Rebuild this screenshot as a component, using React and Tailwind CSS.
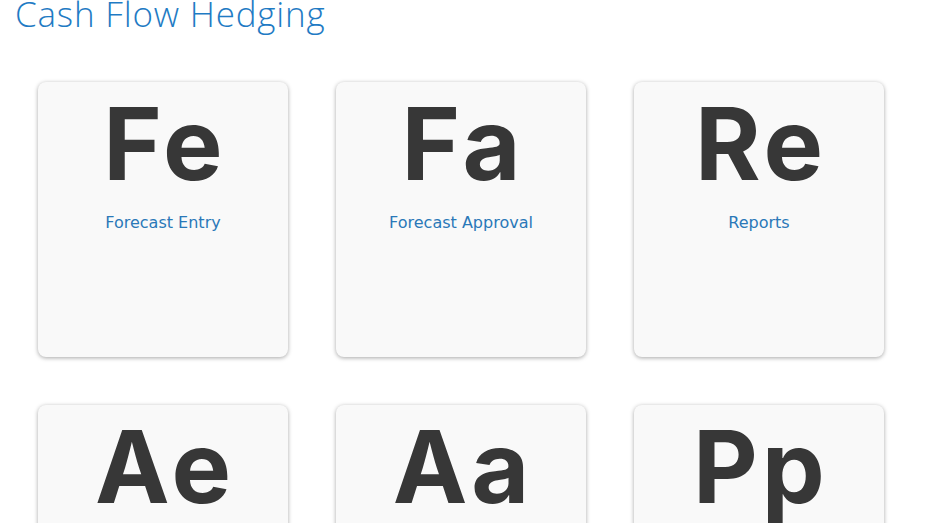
const tiles = [
  { abbr: "Fe", label: "Forecast Entry" },
  { abbr: "Fa", label: "Forecast Approval" },
  { abbr: "Re", label: "Reports" },
  { abbr: "Ae", label: "Approval Entry" },
  { abbr: "Aa", label: "Approval Archive" },
  { abbr: "Pp", label: "Policy Parameters" },
];

const Tile = ({ abbr, label }) => (
  <div className="w-[250px] h-[275px] bg-[#f9f9f9] rounded-[8px] shadow-[0_1px_4px_rgba(0,0,0,0.35)] flex flex-col items-center cursor-pointer">
    <div className="font-['Inter',sans-serif] font-bold text-[100px] leading-none text-[#373737] mt-[12px] tracking-[4px] pl-[4px]">
      {abbr}
    </div>
    <p className="font-['DejaVu_Sans',sans-serif] text-[16px] text-[#2a78b8] mt-[17px]">{label}</p>
  </div>
);

export default function App() {
  return (
    <div className="w-[938px] h-[523px] overflow-hidden bg-white">
      <h1 className="font-['Open_Sans',sans-serif] font-light text-[35px] leading-none text-[#1f7bc4] pl-[15px] -mt-[4px] tracking-[0.8px]">
        Cash Flow Hedging
      </h1>
      <div className="grid grid-cols-[250px_250px_250px] gap-x-[48px] gap-y-[48px] pl-[38px] pt-[51px]">
        {tiles.map((t) => (
          <Tile key={t.abbr} {...t} />
        ))}
      </div>
    </div>
  );
}
